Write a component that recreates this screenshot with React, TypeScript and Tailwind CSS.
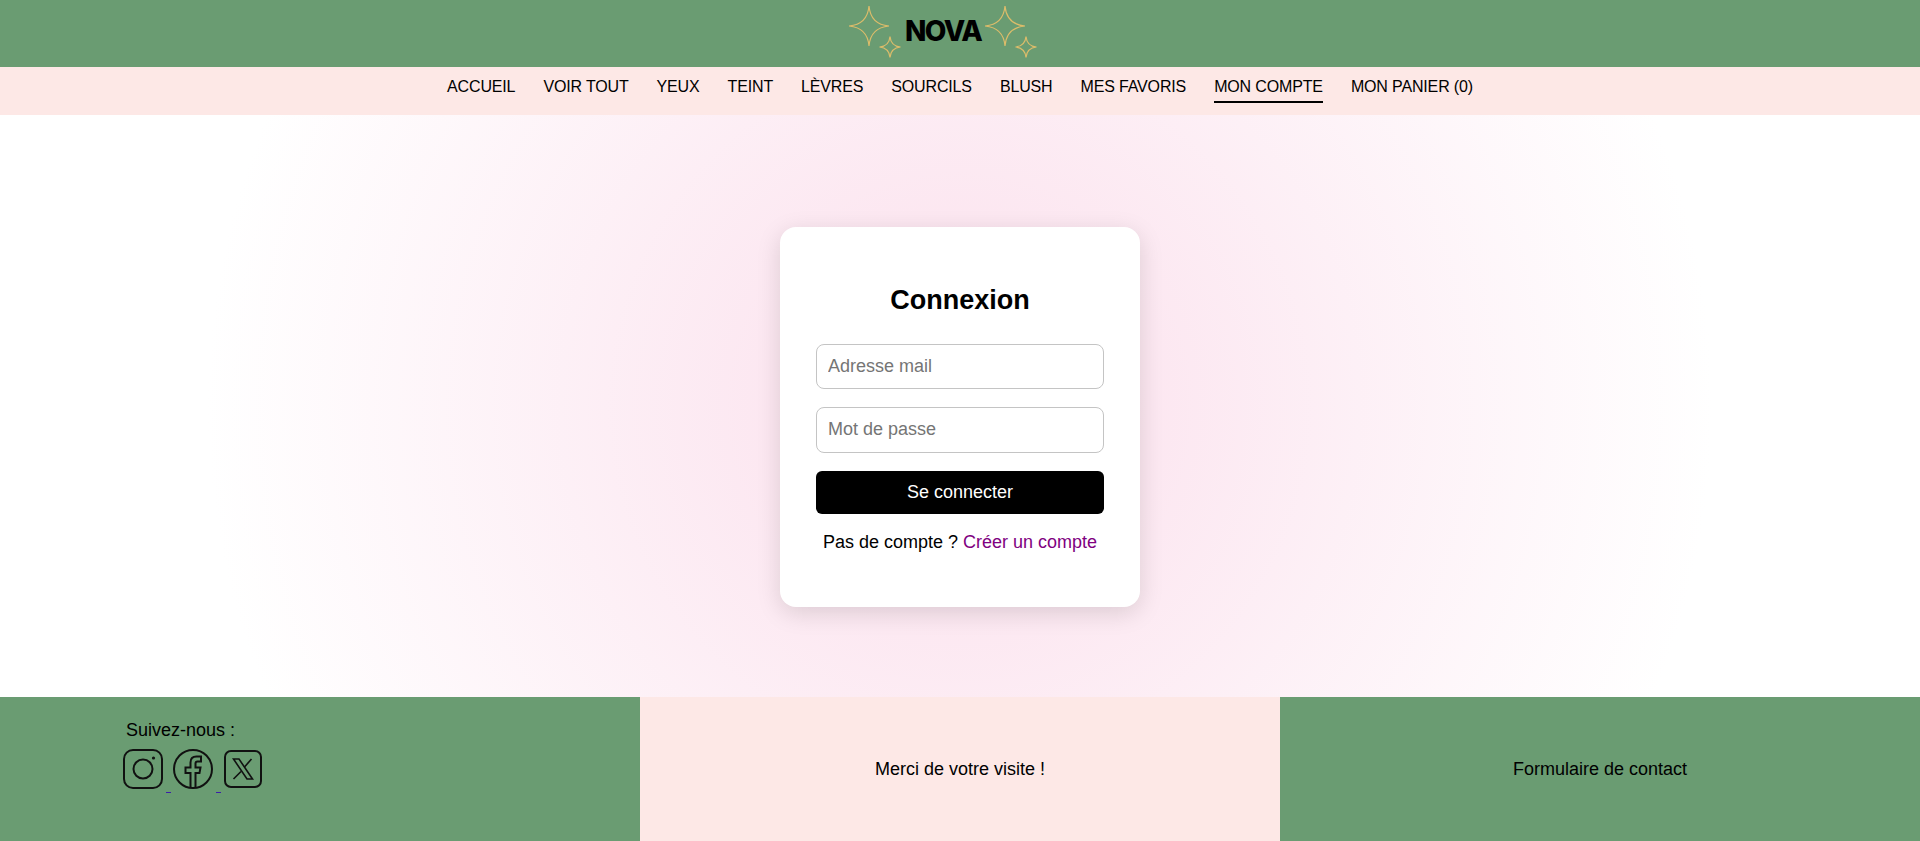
const navItems = ["ACCUEIL", "VOIR TOUT", "YEUX", "TEINT", "LÈVRES", "SOURCILS", "BLUSH", "MES FAVORIS", "MON COMPTE", "MON PANIER (0)"];

function Stars() {
  const star = (cx: number, cy: number, r: number) => {
    const k = r * 0.08;
    return `M${cx} ${cy - r}Q${cx + k} ${cy - k} ${cx + r} ${cy}Q${cx + k} ${cy + k} ${cx} ${cy + r}Q${cx - k} ${cy + k} ${cx - r} ${cy}Q${cx - k} ${cy - k} ${cx} ${cy - r}Z`;
  };
  return (
    <svg width="62" height="60" viewBox="0 0 62 60" fill="none" stroke="#dcbc6a" strokeWidth="1.2">
      <path d={star(21, 26, 20)} />
      <path d={star(42, 47, 10.5)} />
    </svg>
  );
}

function Instagram() {
  return (
    <svg width="40" height="40" viewBox="0 0 40 40" fill="none" stroke="#111" strokeWidth="2">
      <rect x="1" y="1" width="38" height="38" rx="9" />
      <circle cx="20" cy="20" r="9.5" />
      <circle cx="30.5" cy="9" r="1.6" fill="#111" stroke="none" />
    </svg>
  );
}

function Facebook() {
  return (
    <svg width="40" height="40" viewBox="0 0 40 40" fill="none" stroke="#111" strokeWidth="2">
      <circle cx="20" cy="20" r="19" />
      <path d="M17.5 38.5V24H12.5V18.5H17.5V13.5C17.5 9.5 20 7.5 23.5 7.5H28V12.5H24.5C23 12.5 22.5 13.2 22.5 14.5V18.5H27.5L26.5 24H22.5V38.5" />
    </svg>
  );
}

function XIcon() {
  return (
    <svg width="38" height="38" viewBox="0 0 38 38" fill="none" stroke="#111" strokeWidth="2">
      <rect x="1" y="1" width="36" height="36" rx="6" />
      <path d="M9.5 9H15L28.5 29H23Z" strokeWidth="1.6" />
      <path d="M27.5 9L20.5 17M17 21.5L9.5 29" strokeWidth="1.6" />
    </svg>
  );
}

export default function App() {
  return (
    <div className="flex min-h-[841px] flex-col font-['Liberation_Sans',Arial,sans-serif] text-black">
      <header className="flex h-[67px] items-start justify-center overflow-hidden bg-[#6a9c72] pr-[26px]">
        <Stars />
        <span className="ml-[-5px] mt-[14px] w-[79px] whitespace-nowrap font-['Inter',sans-serif] text-[28px] leading-[34px] font-extrabold tracking-[-1.6px]">
          NOVA
        </span>
        <Stars />
      </header>

      <nav className="flex h-[48px] justify-center gap-[28px] bg-[#fde8e6] pt-[11px]">
        {navItems.map((item) => (
          <a
            key={item}
            href="#"
            className={
              item === "MON COMPTE"
                ? "h-[25px] border-b-2 border-black text-base leading-[18px] tracking-[-0.15px]"
                : "h-[25px] text-base leading-[18px] tracking-[-0.15px]"
            }
          >
            {item}
          </a>
        ))}
      </nav>

      <main className="flex h-[582px] items-start justify-center bg-[radial-gradient(circle,#fbdfec_0%,#ffffff_75%)] pt-[112px]">
        <div className="flex h-[380px] w-[360px] flex-col rounded-[16px] bg-white px-9 pt-[55px] shadow-[0_6px_24px_rgba(0,0,0,0.13)]">
          <h1 className="text-center text-[27px] leading-[36px] font-bold">Connexion</h1>
          <form className="mt-[26px] flex flex-col gap-[18px]">
            <input
              placeholder="Adresse mail"
              className="h-[45px] rounded-lg border border-[#c4c4c4] bg-white px-[11px] text-lg placeholder:text-[#757575]"
            />
            <input
              placeholder="Mot de passe"
              className="h-[46px] rounded-lg border border-[#c4c4c4] bg-white px-[11px] pb-[2px] text-lg placeholder:text-[#757575]"
            />
            <button type="button" className="h-[43px] rounded-md bg-black pb-[2px] text-lg text-white">
              Se connecter
            </button>
          </form>
          <p className="mt-[17px] text-center text-lg leading-[22px]">
            Pas de compte ? <a href="#" className="text-[#800080]">Créer un compte</a>
          </p>
        </div>
      </main>

      <footer className="grid h-[144px] grid-cols-3">
        <div className="bg-[#6a9c72] pt-[23px] pl-[123px]">
          <p className="pl-[3px] text-lg leading-[21px]">Suivez-nous :</p>
          <div className="mt-[8px] flex items-end">
            <a href="#" className="flex items-end">
              <Instagram />
              <span className="ml-[3px] h-px w-[5px] translate-y-[4px] bg-[#3b1fa8]" />
            </a>
            <a href="#" className="ml-[2px] flex items-end">
              <Facebook />
              <span className="ml-[3px] h-px w-[5px] translate-y-[4px] bg-[#3b1fa8]" />
            </a>
            <a href="#" className="ml-[3px] mb-px">
              <XIcon />
            </a>
          </div>
        </div>
        <div className="flex items-center justify-center bg-[#fde8e6] text-lg">Merci de votre visite !</div>
        <div className="flex items-center justify-center bg-[#6a9c72] text-lg">Formulaire de contact</div>
      </footer>
    </div>
  );
}
